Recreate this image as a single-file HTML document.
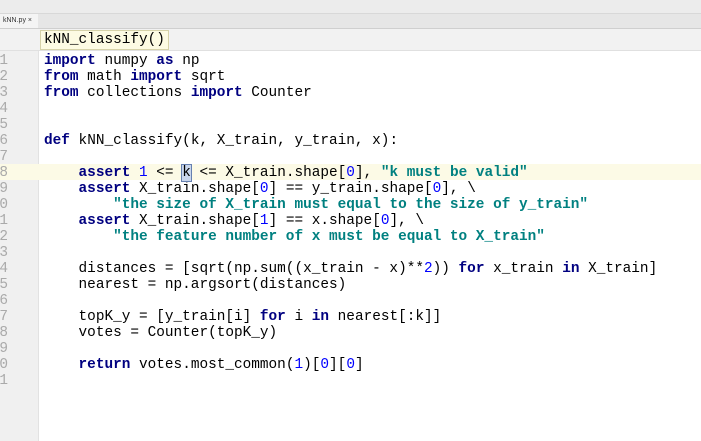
<!DOCTYPE html>
<html><head><style>
body{margin:0;width:701px;height:441px;overflow:hidden;background:#fff;position:relative;font-family:"Liberation Mono",monospace}
.top{position:absolute;left:0;top:0;width:701px;height:13px;background:#ececec;border-bottom:1px solid #d8d8d8}
.tabs{position:absolute;left:0;top:14px;width:701px;height:14px;background:#e6e6e6;border-bottom:1px solid #cfcfcf}
.tab{position:absolute;left:0;top:0;width:38px;height:14px;background:#f4f4f4;font:7px "Liberation Sans",sans-serif;line-height:14px;color:#333;padding-left:3px;box-sizing:border-box}
.bc{position:absolute;left:0;top:29px;width:701px;height:21px;background:#f2f2f2;border-bottom:1px solid #e0e0e0}
.bcb{position:absolute;left:40px;top:30px;height:18px;padding:0 3px;background:#fdfbe3;border:1px solid #d6d2a8;font-size:14.4px;line-height:19px;color:#000}
.gut{position:absolute;left:0;top:51px;width:38px;height:390px;background:#f0f0f0;border-right:1px solid #e2e2e2}
.cl{position:absolute;left:0;top:164px;width:701px;height:16px;background:#fcfae6}
.nums{position:absolute;left:-30px;top:53px;width:38px;text-align:right;font-size:14.4px;line-height:16px;color:#aaa;white-space:pre}
.code{position:absolute;left:44px;top:53px;font-size:14.4px;line-height:16px;color:#000;white-space:pre}
.k{color:#000080;font-weight:bold}.s{color:#008080;font-weight:bold}.n{color:#0000ff}
.cur{background:#c9d6ec;outline:1px solid #6680b0}
</style></head><body>
<div class="top"></div>
<div class="tabs"><div class="tab">kNN.py ×</div></div>
<div class="bc"></div>
<div class="bcb">kNN_classify()</div>
<div class="gut"></div>
<div class="cl"></div>
<div class="nums">1
2
3
4
5
6
7
8
9
0
1
2
3
4
5
6
7
8
9
0
1</div>
<div class="code"><span class="k">import</span> numpy <span class="k">as</span> np
<span class="k">from</span> math <span class="k">import</span> sqrt
<span class="k">from</span> collections <span class="k">import</span> Counter


<span class="k">def</span> kNN_classify(k, X_train, y_train, x):

    <span class="k">assert</span> <span class="n">1</span> &lt;= <span class="cur">k</span> &lt;= X_train.shape[<span class="n">0</span>], <span class="s">"k must be valid"</span>
    <span class="k">assert</span> X_train.shape[<span class="n">0</span>] == y_train.shape[<span class="n">0</span>], \
        <span class="s">"the size of X_train must equal to the size of y_train"</span>
    <span class="k">assert</span> X_train.shape[<span class="n">1</span>] == x.shape[<span class="n">0</span>], \
        <span class="s">"the feature number of x must be equal to X_train"</span>

    distances = [sqrt(np.sum((x_train - x)**<span class="n">2</span>)) <span class="k">for</span> x_train <span class="k">in</span> X_train]
    nearest = np.argsort(distances)

    topK_y = [y_train[i] <span class="k">for</span> i <span class="k">in</span> nearest[:k]]
    votes = Counter(topK_y)

    <span class="k">return</span> votes.most_common(<span class="n">1</span>)[<span class="n">0</span>][<span class="n">0</span>]</div>
</body></html>
